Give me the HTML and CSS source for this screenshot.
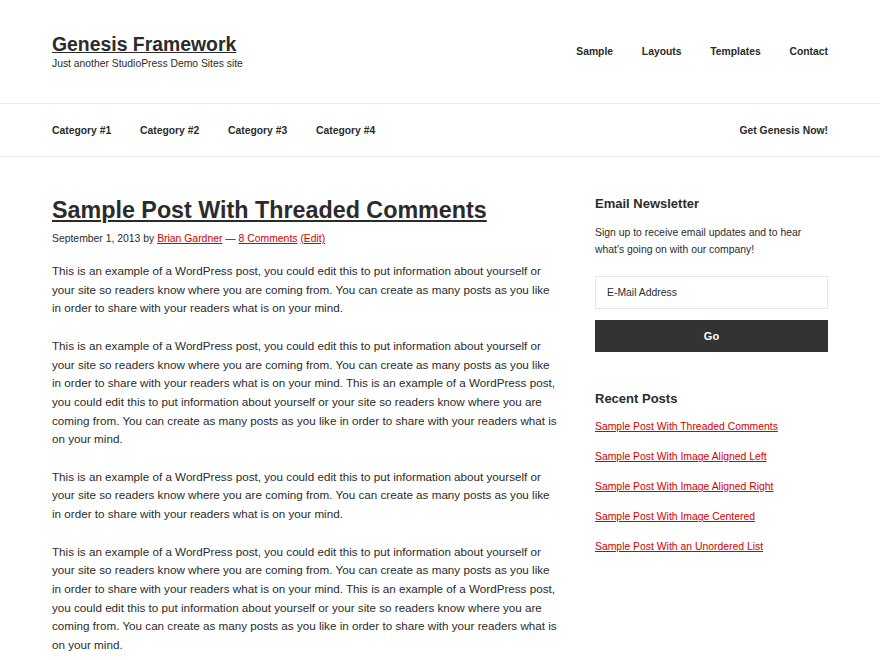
FILE: index.html
```html
<!DOCTYPE html>
<html lang="en">
<head>
<meta charset="utf-8">
<title>Genesis Framework</title>
<link rel="stylesheet" href="styles.css">
</head>
<body>
<header class="site-header">
  <div class="wrap header-wrap">
    <div class="title-area">
      <p class="site-title"><a href="#">Genesis Framework</a></p>
      <p class="site-description">Just another StudioPress Demo Sites site</p>
    </div>
    <nav class="nav-header">
      <a href="#">Sample</a>
      <a href="#">Layouts</a>
      <a href="#">Templates</a>
      <a href="#">Contact</a>
    </nav>
  </div>
</header>
<nav class="nav-primary">
  <div class="wrap nav-wrap">
    <div class="menu">
      <a href="#">Category #1</a>
      <a href="#">Category #2</a>
      <a href="#">Category #3</a>
      <a href="#">Category #4</a>
    </div>
    <div class="menu">
      <a href="#">Get Genesis Now!</a>
    </div>
  </div>
</nav>
<div class="wrap site-inner">
  <main class="content">
    <article class="entry">
      <h1 class="entry-title"><a href="#">Sample Post With Threaded Comments</a></h1>
      <p class="entry-meta">September 1, 2013 by <a href="#">Brian Gardner</a> — <a href="#">8 Comments</a> <a href="#">(Edit)</a></p>
      <p>This is an example of a WordPress post, you could edit this to put information about yourself or your site so readers know where you are coming from. You can create as many posts as you like in order to share with your readers what is on your mind.</p>
      <p>This is an example of a WordPress post, you could edit this to put information about yourself or your site so readers know where you are coming from. You can create as many posts as you like in order to share with your readers what is on your mind. This is an example of a WordPress post, you could edit this to put information about yourself or your site so readers know where you are coming from. You can create as many posts as you like in order to share with your readers what is on your mind.</p>
      <p>This is an example of a WordPress post, you could edit this to put information about yourself or your site so readers know where you are coming from. You can create as many posts as you like in order to share with your readers what is on your mind.</p>
      <p>This is an example of a WordPress post, you could edit this to put information about yourself or your site so readers know where you are coming from. You can create as many posts as you like in order to share with your readers what is on your mind. This is an example of a WordPress post, you could edit this to put information about yourself or your site so readers know where you are coming from. You can create as many posts as you like in order to share with your readers what is on your mind.</p>
    </article>
  </main>
  <aside class="sidebar">
    <section class="widget">
      <h4 class="widget-title">Email Newsletter</h4>
      <p class="widget-text">Sign up to receive email updates and to hear what's going on with our company!</p>
      <form class="subscribe">
        <div class="field">E-Mail Address</div>
        <button type="button" class="go">Go</button>
      </form>
    </section>
    <section class="widget">
      <h4 class="widget-title">Recent Posts</h4>
      <ul class="recent">
        <li><a href="#">Sample Post With Threaded Comments</a></li>
        <li><a href="#">Sample Post With Image Aligned Left</a></li>
        <li><a href="#">Sample Post With Image Aligned Right</a></li>
        <li><a href="#">Sample Post With Image Centered</a></li>
        <li><a href="#">Sample Post With an Unordered List</a></li>
      </ul>
    </section>
  </aside>
</div>
</body>
</html>
```

FILE: styles.css
```css
* { box-sizing: border-box; }
html, body { margin: 0; padding: 0; background: #fff; }
body {
  font-family: "Liberation Sans", Arial, sans-serif;
  color: #2b2b2b;
  font-size: 11.67px;
  line-height: 18.7px;
}
p { margin: 0; }
a { color: #d40000; }
.wrap { width: 776px; margin: 0 auto; }

.site-header { border-bottom: 1px solid #eee; height: 104px; }
.header-wrap { display: flex; justify-content: space-between; align-items: flex-start; padding-top: 32px; }
.site-title { font-size: 19.4px; line-height: 24px; font-weight: bold; }
.site-title a { color: #2b2b2b; }
.site-description { font-size: 10.35px; line-height: 14px; margin-top: 1px; }
.nav-header { display: flex; margin-top: 13px; margin-right: -14.4px; }
.nav-header a, .menu a {
  color: #2b2b2b; text-decoration: none; font-weight: bold; font-size: 10.35px;
  line-height: 14px; padding: 0 14.4px;
}

.nav-primary { border-bottom: 1px solid #eee; height: 53px; }
.nav-wrap { display: flex; justify-content: space-between; align-items: center; height: 52px; padding-top: 1px; }
.menu { display: flex; margin: 0 -14.4px; }

.site-inner { display: flex; justify-content: space-between; padding-top: 38px; }
.content { width: 507px; }
.entry-title { font-size: 23.3px; line-height: 30px; margin: 0; font-weight: bold; }
.entry-title a { color: #2b2b2b; }
.entry-meta { font-size: 10.4px; line-height: 16px; margin: 6px 0 15px; }
.entry p + p { margin-top: 18.7px; }
.entry .entry-meta + p { margin-top: 0; }

.sidebar { width: 233px; padding-top: 0; }
.widget-title { font-size: 13px; line-height: 18px; margin: 0 0 11px; font-weight: bold; }
.widget-text { font-size: 10.4px; line-height: 17px; }
.subscribe { margin-top: 18px; }
.field {
  height: 33px; border: 1px solid #e8e8e8; background: #fff;
  font-size: 10.4px; line-height: 31px; padding: 0 11px; color: #2b2b2b;
}
.go {
  display: block; width: 100%; height: 32px; margin-top: 11px;
  background: #333; color: #fff; border: none; font-family: inherit;
  font-weight: bold; font-size: 11px;
}
.widget + .widget { margin-top: 38px; }
.recent { list-style: none; margin: 0; padding: 0; }
.recent li { font-size: 10.4px; line-height: 15px; margin-bottom: 15px; }
.recent li:first-child { margin-top: 2px; }
```
